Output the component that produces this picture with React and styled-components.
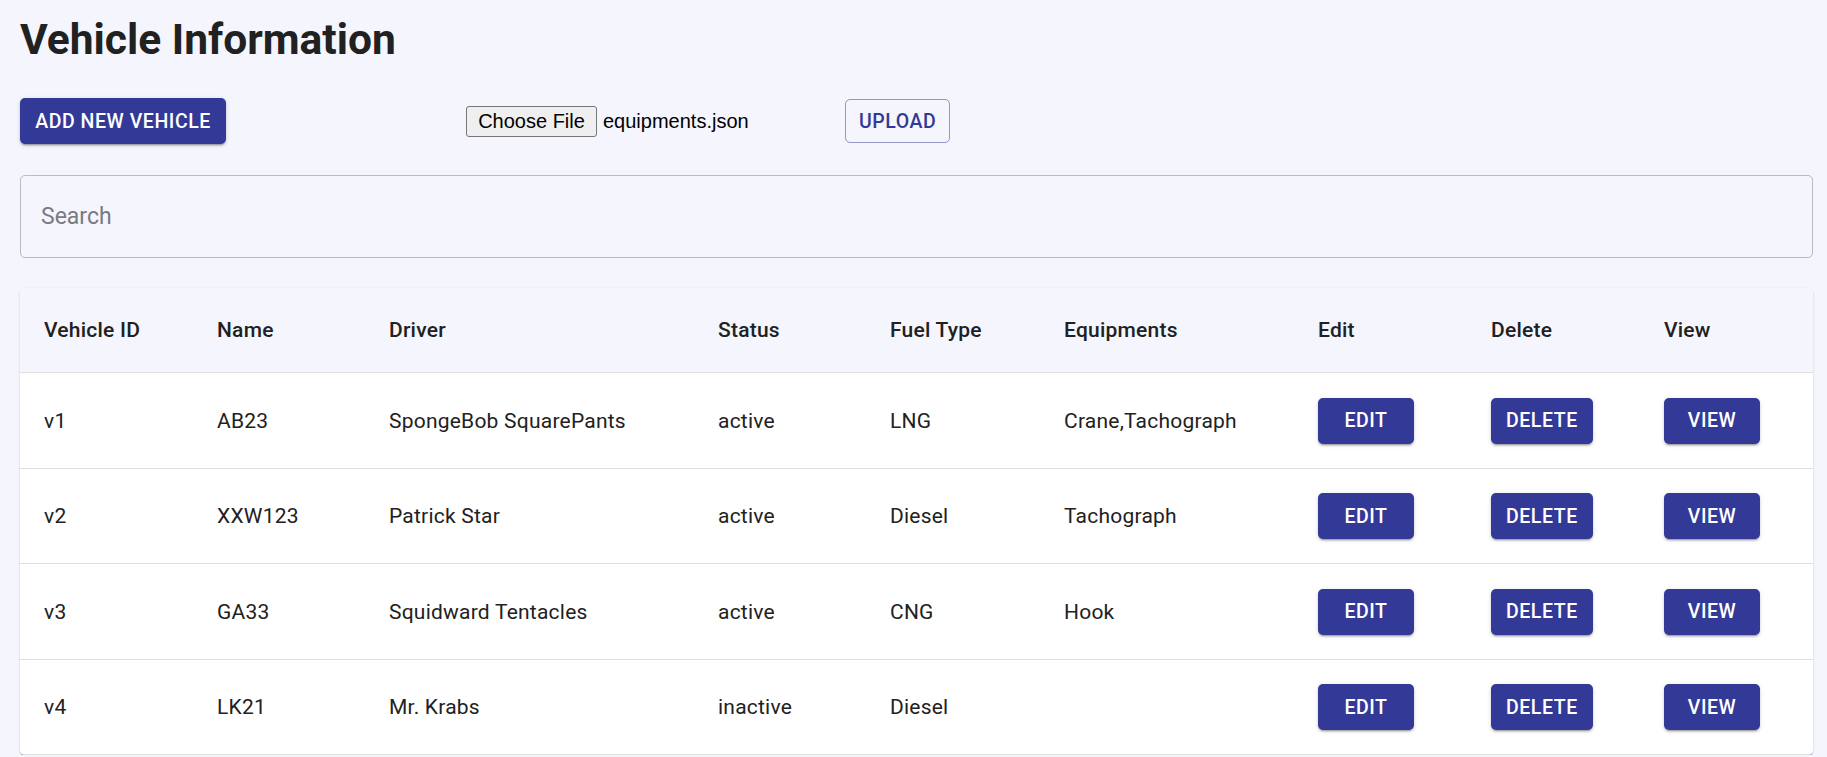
import styled, { createGlobalStyle } from "styled-components";

const PRIMARY = '#333996'

const vehicles = [
    { id: 'v1', name: 'AB23', driver: 'SpongeBob SquarePants', status: 'active', fuel: 'LNG', equipments: 'Crane,Tachograph' },
    { id: 'v2', name: 'XXW123', driver: 'Patrick Star', status: 'active', fuel: 'Diesel', equipments: 'Tachograph' },
    { id: 'v3', name: 'GA33', driver: 'Squidward Tentacles', status: 'active', fuel: 'CNG', equipments: 'Hook' },
    { id: 'v4', name: 'LK21', driver: 'Mr. Krabs', status: 'inactive', fuel: 'Diesel', equipments: '' },
]

const columns = [
    { label: 'Vehicle ID', width: 177 },
    { label: 'Name', width: 172 },
    { label: 'Driver', width: 329 },
    { label: 'Status', width: 172 },
    { label: 'Fuel Type', width: 174 },
    { label: 'Equipments', width: 254 },
    { label: 'Edit', width: 173 },
    { label: 'Delete', width: 173 },
    { label: 'View' },
]

const App = () => {
    return (
        <>
            <GlobalStyle />
            <Page>
                <Title>Vehicle Information</Title>
                <Toolbar>
                    <div>
                        <ContainedButton $wide>Add New Vehicle</ContainedButton>
                    </div>
                    <FilePicker>
                        <ChooseButton type="button">Choose File</ChooseButton>
                        <FileName>equipments.json</FileName>
                    </FilePicker>
                    <div>
                        <OutlinedButton>Upload</OutlinedButton>
                    </div>
                </Toolbar>

                <SearchField placeholder="Search" />

                <Paper>
                    <Table>
                        <colgroup>
                            {columns.map((col) => (
                                <col key={col.label} style={col.width ? { width: col.width } : undefined} />
                            ))}
                        </colgroup>
                        <thead>
                            <tr>
                                {columns.map((col) => (
                                    <HeadCell key={col.label}>{col.label}</HeadCell>
                                ))}
                            </tr>
                        </thead>
                        <tbody>
                            {vehicles.map((v) => (
                                <tr key={v.id}>
                                    <BodyCell>{v.id}</BodyCell>
                                    <BodyCell>{v.name}</BodyCell>
                                    <BodyCell>{v.driver}</BodyCell>
                                    <BodyCell>{v.status}</BodyCell>
                                    <BodyCell>{v.fuel}</BodyCell>
                                    <BodyCell>{v.equipments}</BodyCell>
                                    <BodyCell><ContainedButton>Edit</ContainedButton></BodyCell>
                                    <BodyCell><ContainedButton>Delete</ContainedButton></BodyCell>
                                    <BodyCell><ContainedButton>View</ContainedButton></BodyCell>
                                </tr>
                            ))}
                        </tbody>
                    </Table>
                </Paper>
            </Page>
        </>
    )
}

export default App

const GlobalStyle = createGlobalStyle`
  html, body {
    margin: 0;
    background: #f4f5fd;
    font-family: Roboto, "Liberation Sans", sans-serif;
    color: rgba(0, 0, 0, 0.87);
    overflow: hidden;
  }
`
const Page = styled.div`
  padding: 14px 14px 0 20px;
`
const Title = styled.h1`
  margin: 0;
  font-size: 42.5px;
  line-height: 51px;
  font-weight: 700;
  color: #212121;
`
const Toolbar = styled.div`
  display: grid;
  grid-template-columns: 446px 379px auto;
  align-items: center;
  margin-top: 33px;
  height: 46px;
`
const ContainedButton = styled.button`
  display: inline-flex;
  align-items: center;
  justify-content: center;
  height: 46px;
  min-width: ${(p) => (p.$wide ? '206px' : '96px')};
  padding: 0 15px;
  border: none;
  border-radius: 5px;
  background: ${PRIMARY};
  color: #fff;
  font-family: Roboto, sans-serif;
  font-size: 19.5px;
  font-weight: 500;
  letter-spacing: 0.02857em;
  text-transform: uppercase;
  box-shadow: 0 3px 1px -2px rgba(0, 0, 0, 0.2), 0 2px 2px 0 rgba(0, 0, 0, 0.14), 0 1px 5px 0 rgba(0, 0, 0, 0.12);
  cursor: pointer;
`
const OutlinedButton = styled.button`
  height: 44px;
  min-width: 105px;
  padding: 0 13px;
  border: 1px solid rgba(51, 57, 150, 0.5);
  border-radius: 5px;
  background: transparent;
  color: ${PRIMARY};
  font-family: Roboto, sans-serif;
  font-size: 19.5px;
  font-weight: 500;
  letter-spacing: 0.02857em;
  text-transform: uppercase;
  cursor: pointer;
`
const FilePicker = styled.div`
  display: flex;
  align-items: center;
  gap: 6px;
  font-family: Arial, "Liberation Sans", sans-serif;
  font-size: 20px;
`
const ChooseButton = styled.button`
  height: 31px;
  width: 131px;
  padding: 0;
  border: 1px solid #767676;
  border-radius: 3px;
  background: #efefef;
  color: #000;
  font-family: Arial, "Liberation Sans", sans-serif;
  font-size: 20px;
`
const FileName = styled.span`
  color: #000;
`
const SearchField = styled.input`
  display: block;
  box-sizing: border-box;
  width: 100%;
  height: 83px;
  margin-top: 31px;
  padding: 0 20px;
  border: 1px solid rgba(0, 0, 0, 0.23);
  border-radius: 5px;
  background: transparent;
  font-family: Roboto, sans-serif;
  font-size: 23px;
  color: #212121;
  outline: none;

  &::placeholder {
    color: #7a7a80;
  }
`
const Paper = styled.div`
  margin-top: 30px;
  background: #fff;
  border-radius: 5px;
  overflow: hidden;
  box-shadow: 0 2px 1px -1px rgba(0, 0, 0, 0.2), 0 1px 1px 0 rgba(0, 0, 0, 0.14), 0 1px 3px 0 rgba(0, 0, 0, 0.12);
`
const Table = styled.table`
  width: 100%;
  table-layout: fixed;
  border-collapse: collapse;
`
const HeadCell = styled.th`
  height: 84.8px;
  box-sizing: border-box;
  padding: 0 20px;
  text-align: left;
  font-size: 21px;
  font-weight: 500;
  letter-spacing: 0.01071em;
  color: #212121;
  background: #f4f5fd;
  border-bottom: 1px solid #e0e0e0;

  &:first-child {
    padding-left: 24px;
  }
`
const BodyCell = styled.td`
  height: 95.55px;
  box-sizing: border-box;
  padding: 0 20px;
  font-size: 21px;
  letter-spacing: 0.01071em;
  color: #212121;
  border-bottom: 1px solid #e0e0e0;

  &:first-child {
    padding-left: 24px;
  }
`
